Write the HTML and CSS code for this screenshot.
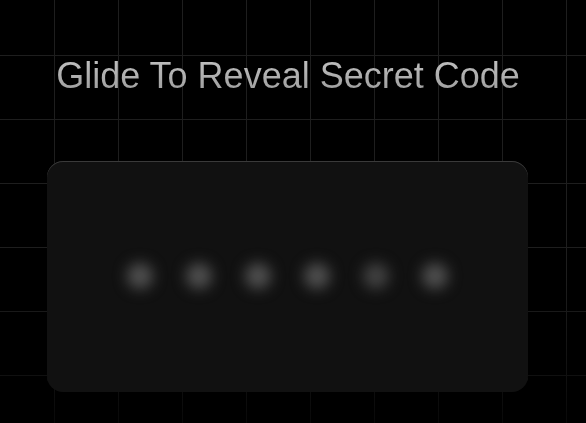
FILE: index.html
```html
<!DOCTYPE html>
<html lang="en">
<head>
<meta charset="utf-8">
<title>Glide To Reveal Secret Code</title>
<link rel="stylesheet" href="styles.css">
</head>
<body>
  <main class="page">
    <h1 class="title">Glide To Reveal Secret Code</h1>
    <section class="card">
      <div class="code">
        <span class="dot"></span>
        <span class="dot"></span>
        <span class="dot"></span>
        <span class="dot"></span>
        <span class="dot dim"></span>
        <span class="dot"></span>
      </div>
    </section>
  </main>
</body>
</html>
```
FILE: styles.css
```css
html, body {
  margin: 0;
  height: 100%;
}
body {
  background-color: #000;
  background-image:
    linear-gradient(to bottom, rgba(0,0,0,0) 0%, rgba(0,0,0,0) 65%, rgba(0,0,0,0.7) 100%),
    linear-gradient(to right, #1e1e1e 1px, transparent 1px),
    linear-gradient(to bottom, #1e1e1e 1px, transparent 1px);
  background-size: 100% 100%, 64px 64px, 64px 64px;
  background-position: 0 0, 54px 55px, 54px 55px;
  font-family: "Liberation Sans", Arial, sans-serif;
  overflow: hidden;
}
.page {
  width: 481px;
  margin-left: 47px;
  padding-top: 55px;
  display: flex;
  flex-direction: column;
  align-items: center;
  gap: 65px;
}
.title {
  margin: 0 0 0 1px;
  font-size: 36px;
  font-weight: 400;
  line-height: 41px;
  white-space: nowrap;
  background: linear-gradient(to bottom, #c4c4c4, #9a9a9a);
  -webkit-background-clip: text;
  background-clip: text;
  color: transparent;
}
.card {
  box-sizing: border-box;
  width: 481px;
  height: 231px;
  background: #111;
  border-radius: 16px;
  box-shadow: inset 0 1px 0 #3a3a3a;
  display: flex;
  align-items: center;
  justify-content: center;
}
.code {
  display: flex;
  gap: 33px;
  margin-top: -2px;
}
.dot {
  width: 26px;
  height: 26px;
  border-radius: 50%;
  background: #505050;
  filter: blur(7px);
}
.dot.dim {
  background: #424242;
}
```
